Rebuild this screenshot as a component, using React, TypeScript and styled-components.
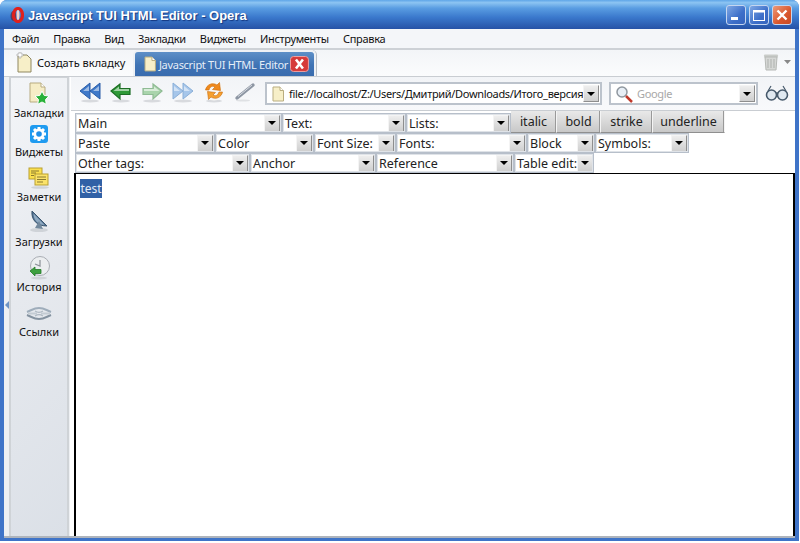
import React from "react";
import styled, { createGlobalStyle } from "styled-components";

const Global = createGlobalStyle`
  html, body { margin: 0; padding: 0; background: #fff; }
  body { font-family: "Noto Sans", sans-serif; overflow: hidden; }
  * { box-sizing: border-box; }
`;
const Win = styled.div`
  width: 799px; height: 541px; display: flex; flex-direction: column;
  background: #3f74c8; border-radius: 7px 7px 0 0; overflow: hidden;
`;
const TitleBar = styled.div`
  height: 29px; flex: none; display: flex; align-items: center; padding: 1px 7px 0 10px;
  background: linear-gradient(#5fa6e8 0%, #8cc4f2 9%, #5a9de2 28%, #3a78cc 60%, #2652a6 100%);
`;
const TitleText = styled.div`
  margin-left: 4px; flex: 1; color: #fff; font: bold 13px "Liberation Sans", sans-serif;
  text-shadow: 1px 1px 1px #12357f; white-space: nowrap;
`;
const WinButtons = styled.div` display: flex; gap: 3px; margin-top: -1px; `;
const WinBtn = styled.div<{ $close?: boolean }>`
  width: 20px; height: 20px; border: 1px solid #c5d6f0; border-radius: 3px;
  background: ${p => p.$close ? "linear-gradient(135deg,#ec9a7a,#d9562c 60%,#c64a26)" : "linear-gradient(135deg,#7fa8e4,#3d6fc9 60%,#3564bd)"};
  display: flex; align-items: center; justify-content: center;
`;
const Frame = styled.div`
  flex: 1; min-height: 0; margin: 0 4px 3px 4px; display: flex; flex-direction: column; background: #fff;
  border-bottom: 2px solid #aeb4bc;
`;
const MenuBar = styled.div`
  height: 21px; flex: none; display: flex; align-items: center; padding-left: 8px; gap: 14px;
  background: #f4f6f9; border-bottom: 2px solid #cdd1d6; font: 11px "Noto Sans", sans-serif; letter-spacing: -0.3px; color: #111;
`;
const TabBar = styled.div`
  height: 27px; flex: none; display: flex; align-items: flex-end; padding-left: 11px;
  background: linear-gradient(#f3f5f8,#fbfcfd); border-bottom: 1px solid #c9cdd2; position: relative;
`;
const NewTab = styled.div`
  display: flex; align-items: center; gap: 4px; height: 26px; width: 118px; padding-bottom: 2px;
  font: 11px "Noto Sans", sans-serif; color: #111; white-space: nowrap;
`;
const ActiveTab = styled.div`
  width: 183px; height: 26px; display: flex; align-items: center; padding: 0 5px 0 8px; gap: 2px;
  background: linear-gradient(#5d8fc7,#3f73b4 55%,#3a6cae); border: 2px solid #eef1f5; border-bottom: 0; border-radius: 5px 5px 0 0;
  box-shadow: 1px 0 0 #b9bec5; color: #e6eef8; font: 11px "Noto Sans", sans-serif; letter-spacing: -0.3px; white-space: nowrap;
`;
const TabTitle = styled.div` flex: 1; `;
const Trash = styled.div`
  position: absolute; right: 4px; top: 3px; display: flex; align-items: center; gap: 5px;
`;
const Workspace = styled.div` flex: 1; min-height: 0; display: flex; background: #f1f3f6; `;
const Sidebar = styled.div`
  width: 66px; flex: none; position: relative; padding-left: 5px; background: #eef0f3;
`;
const SideInner = styled.div`
  width: 60px; height: 100%; border: 2px solid #cfd3d7; border-bottom: 0; border-top: 1px solid #cfd3d7; padding-top: 2px;
  background: linear-gradient(135deg,#f3f5f8 0%,#e6e9ee 45%,#dbe0e7 100%);
`;
const SideItem = styled.div<{ $h: number }>`
  height: ${p => p.$h}px; display: flex; flex-direction: column; align-items: center;
  font: 11px "Noto Sans", sans-serif; color: #111;
`;
const SideIcon = styled.div<{ $h: number; $top?: number }>`
  height: ${p => p.$h}px; padding-top: ${p => p.$top ?? 0}px; display: flex; align-items: center; justify-content: center; flex: none;
`;
const Collapse = styled.div`
  position: absolute; left: 1px; top: 224px; width: 0; height: 0;
  border: 4px solid transparent; border-right: 4px solid #6f94c4; border-left: 0;
`;
const Main = styled.div` flex: 1; min-width: 0; display: flex; flex-direction: column; background: #fff; `;
const NavBar = styled.div`
  height: 34px; flex: none; margin-left: 1px; display: flex; align-items: center;
  background: linear-gradient(#f2f4f7,#f8f9fb); border-bottom: 1px solid #c9cdd2;
`;
const NavIcons = styled.div` display: flex; width: 194px; padding: 0 0 4px 3px; `;
const NavIcon = styled.div` width: 31px; height: 24px; display: flex; align-items: center; justify-content: center; `;
const Glasses = styled.div` display: flex; padding-bottom: 2px; `;
const Field = styled.div<{ $w: number }>`
  width: ${p => p.$w}px; height: 23px; flex: none; border: 2px solid #bcc3cc; background: #fff; display: flex; align-items: center;
  font: 11px "Noto Sans", sans-serif; letter-spacing: -0.32px; color: #111; padding: 0 1px 0 4px; white-space: nowrap;
`;
const FieldText = styled.div<{ $muted?: boolean }>`
  flex: 1; min-width: 0; margin-left: 4px; color: ${p => p.$muted ? "#a8a8a8" : "#111"};
`;
const Drop = styled.div`
  width: 16px; height: 17px; flex: none; display: flex; align-items: center; justify-content: center;
  background: linear-gradient(#eeeeee,#cfcfcf); border: 1px solid; border-color: #f4f4f4 #8e8e8e #8e8e8e #f4f4f4;
  &::after { content: ""; width: 0; height: 0; border: 4px solid transparent; border-top: 4px solid #000; border-bottom: 0; }
`;
const Gap = styled.div<{ $w: number }>` width: ${p => p.$w}px; flex: none; `;
const Tools = styled.div` display: flex; flex-direction: column; padding: 0 0 0 4px; flex: none; `;
const Row = styled.div` display: flex; height: 20px; padding-left: 1px; `;
const TopRow = styled(Row)` height: 22px; align-items: flex-end; `;
const Sel = styled.div<{ $w: number }>`
  width: ${p => p.$w}px; height: 20px; flex: none; display: flex; align-items: center; justify-content: space-between;
  border: 1px solid #b7bfca; outline: 1px solid #dfe3e8; outline-offset: -2px; background: #fff; padding: 0 1px 0 2px;
  font: 12.5px "Noto Sans", sans-serif; color: #222; white-space: nowrap;
`;
const TBtn = styled.div<{ $w: number }>`
  width: ${p => p.$w}px; height: 22px; flex: none; display: flex; align-items: center; justify-content: center;
  background: linear-gradient(#e9e9e9,#d2d2d2 70%,#c8c8c8); border-right: 1px solid #f4f4f4; border-bottom: 1px solid #8f8f8f; box-shadow: inset -1px 0 0 #999;
  font: 12.5px "Noto Sans", sans-serif; color: #222;
`;
const Editor = styled.div`
  flex: 1; margin-left: 4px; border-style: solid; border-color: #000; border-width: 1px 2px 0 2px; background: #fff; padding: 5px 0 0 4px;
  font: 12px/19px "Noto Sans", sans-serif;
`;
const Selected = styled.span`
  display: inline-block; height: 19px; padding: 0 0.5px; background: #3161a6; color: #e3ebf6; white-space: nowrap;
`;

const Doc = ({ s = 14 }: { s?: number }) => (
  <svg width={s} height={s + 2} viewBox="0 0 14 16"><path d="M2 1h7l3.5 3.5V15H2z" fill="#f7efc8" stroke="#b9ad80" /><path d="M9 1v3.5h3.5" fill="#fff" stroke="#b9ad80" /></svg>
);
const Arrow = ({ c, c2, flip }: { c: string; c2: string; flip?: boolean }) => (
  <svg width="24" height="22" viewBox="0 0 24 22" style={flip ? { transform: "scaleX(-1)" } : undefined}>
    <ellipse cx="12" cy="20" rx="9" ry="1.400" fill="#d8dade" />
    <path d="M2 10 11 3v4.500h10v6H11V18z" fill={c} stroke={c2} strokeWidth="1.200" />
    <path d="M4.500 10 10 5.500V8h10v2z" fill="#fff" opacity=".55" />
  </svg>
);
const Double = ({ c, c2, flip }: { c: string; c2: string; flip?: boolean }) => (
  <svg width="24" height="22" viewBox="0 0 24 22" style={flip ? { transform: "scaleX(-1)" } : undefined}>
    <ellipse cx="12" cy="20" rx="9" ry="1.400" fill="#d8dade" />
    <path d="M12 2v16L2 10z" fill={c} stroke={c2} /><path d="M22 2v16L12 10z" fill={c} stroke={c2} />
    <path d="M11 5v5H5zM21 5v5h-6z" fill="#fff" opacity=".5" />
  </svg>
);
const Reload = () => (
  <svg width="24" height="24" viewBox="0 0 24 24">
    <ellipse cx="12" cy="21" rx="8" ry="1.500" fill="#d8dade" />
    <circle cx="12" cy="11" r="9.500" fill="#f7f7f5" />
    <path d="M3.500 10c1-5.500 7-8 11.500-5l2.500-2.500 1 8-8-1 2.500-2.500c-2.500-1.500-5-.5-6 3z" fill="#f08a1c" stroke="#c96a0c" strokeWidth=".6" />
    <path d="M20.500 12c-1 5.500-7 8-11.500 5l-2.500 2.500-1-8 8 1-2.500 2.500c2.500 1.500 5 .5 6-3z" fill="#f5a030" stroke="#c96a0c" strokeWidth=".6" />
  </svg>
);
const Wand = () => (
  <svg width="22" height="20" viewBox="0 0 22 20">
    <ellipse cx="9" cy="18.500" rx="7" ry="1" fill="#dfe1e4" />
    <path d="M3 16 19 3" stroke="#8d96a3" strokeWidth="3.400" strokeLinecap="round" />
    <path d="M4 14.500 18 3" stroke="#d8dce2" strokeWidth="1" />
  </svg>
);
const Bookmarks = () => (
  <svg width="24" height="24" viewBox="0 0 24 24">
    <path d="M3 2h11l4 4v15H3z" fill="#f6edc6" stroke="#b7ab80" /><path d="M14 2v4h4" fill="#fff" stroke="#b7ab80" />
    <path d="m15 10 2.200 4.400 4.800.7-3.500 3.400.8 4.800-4.300-2.300-4.300 2.300.8-4.800L8 15.100l4.800-.7z" fill="#29b13a" stroke="#fff" />
  </svg>
);
const Widgets = () => (
  <svg width="20" height="20" viewBox="0 0 20 20">
    <rect x="1" y="1" width="18" height="18" rx="3" fill="#1f9bf0" />
    <circle cx="10" cy="10" r="5.500" fill="#fff" />
    <path d="M10 3v14M3 10h14M5 5l10 10M15 5 5 15" stroke="#fff" strokeWidth="3" />
    <circle cx="10" cy="10" r="2.800" fill="#1f8fe8" />
  </svg>
);
const Notes = () => (
  <svg width="22" height="22" viewBox="0 0 22 22">
    <ellipse cx="12" cy="20.500" rx="9" ry="1.300" fill="#cfd3d8" />
    <rect x="1" y="1" width="13" height="11" fill="#fbe04e" stroke="#b9a030" />
    <rect x="7" y="7" width="13" height="11" fill="#fbe36a" stroke="#b9a030" />
    <path d="M3 4h8M3 6h5M3 8.500h3M9 10h9M9 12.500h9M9 15h6" stroke="#8a7a30" />
  </svg>
);
const Dish = () => (
  <svg width="24" height="24" viewBox="0 0 24 24">
    <ellipse cx="12" cy="21" rx="9" ry="2" fill="#cfd3d8" />
    <path d="M5 2c-1 9 5 15 15 15z" fill="#4f6f8f" stroke="#3b566f" />
    <path d="M6.500 4.500c0 6.500 4 11 11 11.500z" fill="#90aac2" />
    <path d="M8 19l4-7 4 8z" fill="#72889c" />
  </svg>
);
const History = () => (
  <svg width="26" height="24" viewBox="0 0 26 24">
    <circle cx="14" cy="10" r="9.500" fill="#eceef0" stroke="#a9adb3" />
    <path d="M14 4v6l-5-2" stroke="#8b9097" strokeWidth="1.200" fill="none" />
    <ellipse cx="13" cy="22" rx="8" ry="1.500" fill="#d0d3d8" />
    <path d="M4 15l5-4v2.500h6v4H9V20z" fill="#3da03f" stroke="#247a28" strokeWidth=".8" />
  </svg>
);
const Links = () => (
  <svg width="26" height="18" viewBox="0 0 26 18">
    <path d="M1 8c5-2 7-4 12-4s7 2 12 4" fill="none" stroke="#9fadbb" strokeWidth="2" />
    <path d="M1 11c5 2 7 4 12 4s7-2 12-4" fill="none" stroke="#8492a0" strokeWidth="2" />
    <path d="M2 9.500h9M15 9.500h9" stroke="#c3cbd3" strokeWidth="2" />
    <path d="M9 7c3 2 5 2 8 0M9 12c3-2 5-2 8 0" fill="none" stroke="#aeb8c2" strokeWidth="1.200" />
  </svg>
);
const OperaLogo = () => (
  <svg width="14" height="16" viewBox="0 0 14 16">
    <ellipse cx="3.500" cy="9" rx="3" ry="5" fill="#5a2a3a" opacity=".7" />
    <ellipse cx="8" cy="8" rx="4.500" ry="6.500" fill="none" stroke="#e0201c" strokeWidth="3.200" />
    <ellipse cx="8" cy="8" rx="1.500" ry="5" fill="#f4d0c8" />
  </svg>
);

const Sl = ({ w, t }: { w: number; t: string }) => <Sel $w={w}><span>{t}</span><Drop /></Sel>;

export default function App() {
  return (
    <Win>
      <Global />
      <TitleBar>
        <OperaLogo />
        <TitleText>Javascript TUI HTML Editor - Opera</TitleText>
        <WinButtons>
          <WinBtn><svg width="14" height="14"><rect x="2" y="9" width="7" height="3" fill="#fff" /></svg></WinBtn>
          <WinBtn><svg width="14" height="14"><rect x="1.500" y="2.500" width="11" height="10" fill="none" stroke="#fff" /><rect x="1" y="2" width="12" height="2.500" fill="#fff" /></svg></WinBtn>
          <WinBtn $close><svg width="14" height="14"><path d="M2.500 2.500l9 9M11.500 2.500l-9 9" stroke="#fff" strokeWidth="2.400" /></svg></WinBtn>
        </WinButtons>
      </TitleBar>
      <Frame>
        <MenuBar>
          {["Файл", "Правка", "Вид", "Закладки", "Виджеты", "Инструменты", "Справка"].map(m => <span key={m}>{m}</span>)}
        </MenuBar>
        <TabBar>
          <NewTab>
            <svg width="18" height="21" viewBox="0 0 18 21"><path d="M3 3h9l4 4v13H3z" fill="#f7efc8" stroke="#8f8760" /><path d="M4 0h2v2h2v2H6v2H4V4H2V2h2z" fill="#fff" stroke="#9a9a9a" strokeWidth=".6" /></svg>
            Создать вкладку
          </NewTab>
          <ActiveTab>
            <Doc />
            <TabTitle>Javascript TUI HTML Editor</TabTitle>
            <svg width="19" height="16" viewBox="0 0 19 16"><rect x=".5" y=".5" width="18" height="15" rx="3" fill="#d63a3a" stroke="#f0a0a0" /><path d="M6 3.500l7 9M13 3.500l-7 9" stroke="#fff" strokeWidth="2.600" /></svg>
          </ActiveTab>
          <Trash>
            <svg width="16" height="18" viewBox="0 0 16 18"><rect x="1" y="1.500" width="14" height="3" rx="1" fill="#c9ccc9" /><path d="M2 4h12l-1 13H3z" fill="#d6d8d6" stroke="#b5b8b5" /><path d="M5 6v9M8 6v9M11 6v9" stroke="#aeb1ae" /></svg>
            <svg width="7" height="4"><path d="M0 0h7L3.500 4z" fill="#888" /></svg>
          </Trash>
        </TabBar>
        <Workspace>
          <Sidebar>
            <SideInner>
              <SideItem $h={44}><SideIcon $h={25}><Bookmarks /></SideIcon>Закладки</SideItem>
              <SideItem $h={39}><SideIcon $h={20}><Widgets /></SideIcon>Виджеты</SideItem>
              <SideItem $h={45}><SideIcon $h={26} $top={4}><Notes /></SideIcon>Заметки</SideItem>
              <SideItem $h={45}><SideIcon $h={26}><Dish /></SideIcon>Загрузки</SideItem>
              <SideItem $h={45}><SideIcon $h={26} $top={4}><History /></SideIcon>История</SideItem>
              <SideItem $h={45}><SideIcon $h={26} $top={4}><Links /></SideIcon>Ссылки</SideItem>
            </SideInner>
            <Collapse />
          </Sidebar>
          <Main>
            <NavBar>
              <NavIcons>
                <NavIcon><Double c="#3f79c9" c2="#2a5da8" /></NavIcon>
                <NavIcon><Arrow c="#2f9a37" c2="#1d6e25" /></NavIcon>
                <NavIcon><Arrow c="#a9d4ac" c2="#8fbb94" flip /></NavIcon>
                <NavIcon><Double c="#a6c6ea" c2="#8aafd8" flip /></NavIcon>
                <NavIcon><Reload /></NavIcon>
                <NavIcon><Wand /></NavIcon>
              </NavIcons>
              <Field $w={337}>
                <Doc />
                <FieldText>file://localhost/Z:/Users/Дмитрий/Downloads/Итого_версия</FieldText>
                <Drop />
              </Field>
              <Gap $w={7} />
              <Field $w={149}>
                <svg width="18" height="18" viewBox="0 0 18 18"><circle cx="7" cy="7" r="5" fill="#e8eff6" stroke="#8f979f" strokeWidth="1.500" /><path d="M11 11l6 6" stroke="#c0392b" strokeWidth="2.500" /></svg>
                <FieldText $muted>Google</FieldText>
                <Drop />
              </Field>
              <Gap $w={7} />
              <Glasses>
                <svg width="24" height="18" viewBox="0 0 24 18"><circle cx="6.500" cy="11" r="5" fill="#dfe8f0" stroke="#46596b" strokeWidth="1.600" /><circle cx="17.500" cy="11" r="5" fill="#dfe8f0" stroke="#46596b" strokeWidth="1.600" /><path d="M11 9.500c.7-.7 1.300-.7 2 0M3 7l3-5M21 7l-3-5" stroke="#46596b" strokeWidth="1.200" fill="none" /></svg>
              </Glasses>
            </NavBar>
            <Tools>
              <TopRow>
                <Sl w={207} t="Main" /><Sl w={124} t="Text:" /><Sl w={105} t="Lists:" />
                <TBtn $w={46}>italic</TBtn><TBtn $w={44}>bold</TBtn><TBtn $w={52}>strike</TBtn><TBtn $w={72}>underline</TBtn>
              </TopRow>
              <Row>
                <Sl w={140} t="Paste" /><Sl w={99} t="Color" /><Sl w={82} t="Font Size:" /><Sl w={131} t="Fonts:" /><Sl w={68} t="Block" /><Sl w={94} t="Symbols:" />
              </Row>
              <Row>
                <Sl w={175} t="Other tags:" /><Sl w={126} t="Anchor" /><Sl w={138} t="Reference" /><Sl w={80} t="Table edit:" />
              </Row>
            </Tools>
            <Editor><Selected>test</Selected></Editor>
          </Main>
        </Workspace>
      </Frame>
    </Win>
  );
}
